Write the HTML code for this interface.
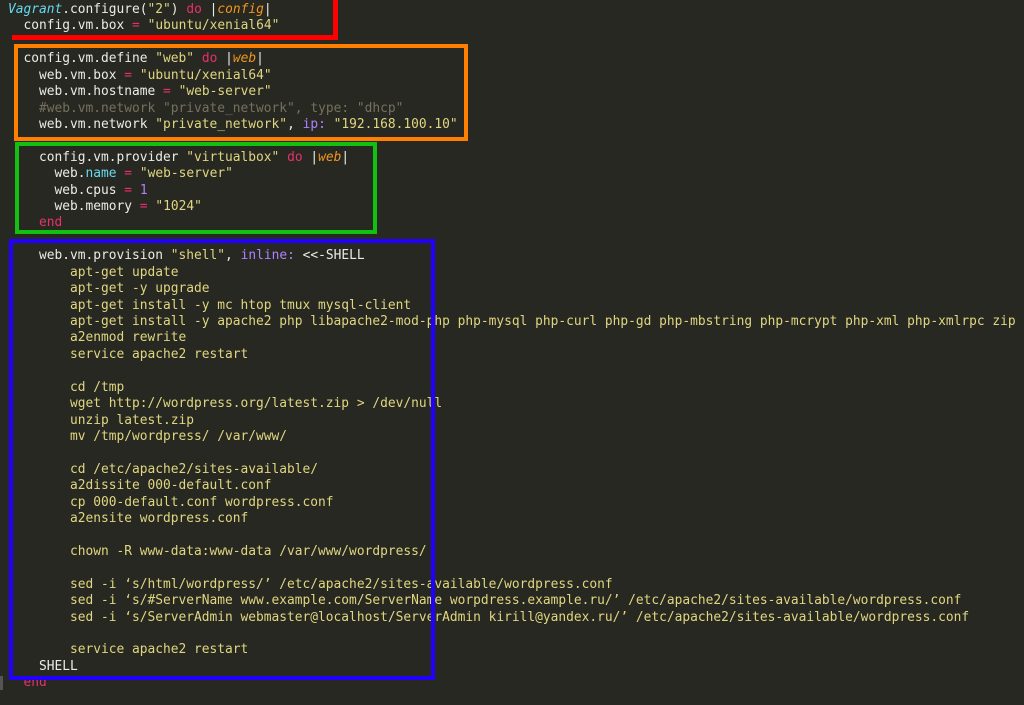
<!DOCTYPE html>
<html><head><meta charset="utf-8"><style>
html,body{margin:0;padding:0;background:#272822;width:1024px;height:705px;overflow:hidden}
pre{position:absolute;left:8px;top:2px;margin:0;font-family:"DejaVu Sans Mono","Liberation Mono",monospace;font-size:12.88px;line-height:16.42px;color:#ecece4;white-space:pre}
.k{color:#e8306c}.s{color:#e0d680}.c{color:#75715e}.i{color:#66d9ef;font-style:italic}.p{color:#f0961f;font-style:italic}.n{color:#ae81ff}.f{color:#66d9ef}
.b{position:absolute;box-sizing:border-box}
</style></head><body>
<pre><span class="i">Vagrant</span>.configure(<span class="s">"2"</span>) <span class="k">do</span> |<span class="p">config</span>|
  config.vm.box <span class="k">=</span> <span class="s">"ubuntu/xenial64"</span>

  config.vm.define <span class="s">"web"</span> <span class="k">do</span> |<span class="p">web</span>|
    web.vm.box <span class="k">=</span> <span class="s">"ubuntu/xenial64"</span>
    web.vm.hostname <span class="k">=</span> <span class="s">"web-server"</span>
    <span class="c">#web.vm.network "private_network", type: "dhcp"</span>
    web.vm.network <span class="s">"private_network"</span>, <span class="n">ip:</span> <span class="s">"192.168.100.10"</span>

    config.vm.provider <span class="s">"virtualbox"</span> <span class="k">do</span> |<span class="p">web</span>|
      web.<span class="f">name</span> <span class="k">=</span> <span class="s">"web-server"</span>
      web.cpus <span class="k">=</span> <span class="n">1</span>
      web.memory <span class="k">=</span> <span class="s">"1024"</span>
    <span class="k">end</span>

    web.vm.provision <span class="s">"shell"</span>, <span class="n">inline:</span> &lt;&lt;-SHELL<span class="s">
        apt-get update
        apt-get -y upgrade
        apt-get install -y mc htop tmux mysql-client
        apt-get install -y apache2 php libapache2-mod-php php-mysql php-curl php-gd php-mbstring php-mcrypt php-xml php-xmlrpc zip
        a2enmod rewrite
        service apache2 restart

        cd /tmp
        wget http://wordpress.org/latest.zip &gt; /dev/null
        unzip latest.zip
        mv /tmp/wordpress/ /var/www/

        cd /etc/apache2/sites-available/
        a2dissite 000-default.conf
        cp 000-default.conf wordpress.conf
        a2ensite wordpress.conf

        chown -R www-data:www-data /var/www/wordpress/

        sed -i ‘s/html/wordpress/’ /etc/apache2/sites-available/wordpress.conf
        sed -i ‘s/#ServerName www.example.com/ServerName worpdress.example.ru/’ /etc/apache2/sites-available/wordpress.conf
        sed -i ‘s/ServerAdmin webmaster@localhost/ServerAdmin kirill@yandex.ru/’ /etc/apache2/sites-available/wordpress.conf

        service apache2 restart
</span>    SHELL
  <span class="k">end</span></pre>
<div class="b" style="left:333px;top:0;width:5px;height:40px;background:#f00"></div>
<div class="b" style="left:12px;top:35px;width:326px;height:5px;background:#f00"></div>
<div class="b" style="left:14px;top:44px;width:454px;height:97px;border:4px solid #ff7f00"></div>
<div class="b" style="left:15px;top:142px;width:362px;height:92px;border:4px solid #11c011"></div>
<div class="b" style="left:9px;top:239px;width:426px;height:441px;border:4px solid #2200ff"></div>
<div class="b" style="left:0;top:676px;width:3px;height:14px;background:#555"></div>
</body></html>
